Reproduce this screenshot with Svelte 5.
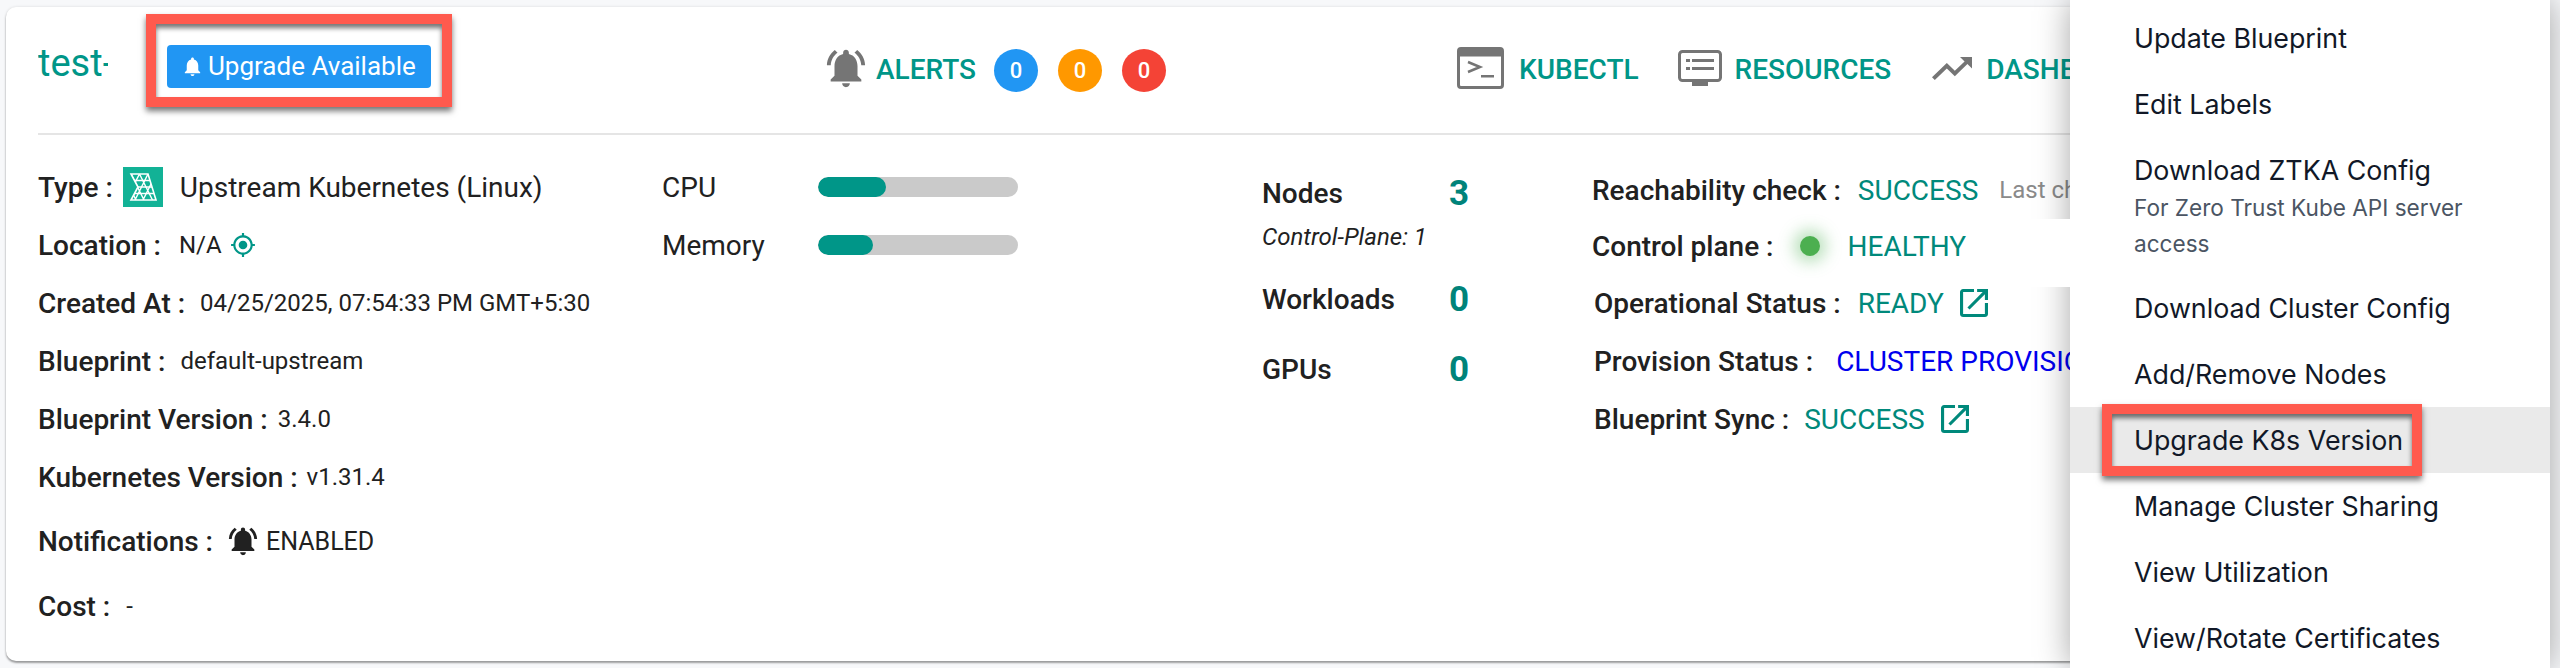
<script>
  const bellRing = "M7.58 4.08L6.15 2.65C3.75 4.48 2.17 7.3 2.03 10.5h2c.15-2.65 1.51-4.97 3.55-6.42zm12.39 6.42h2c-.15-3.2-1.73-6.02-4.12-7.85l-1.42 1.43c2.02 1.45 3.39 3.77 3.54 6.42zM18 11c0-3.07-1.64-5.64-4.5-6.32V4c0-.83-.67-1.5-1.5-1.5s-1.5.67-1.5 1.5v.68C7.63 5.36 6 7.92 6 11v5l-2 2v1h16v-1l-2-2v-5zm-6 11c.14 0 .27-.01.4-.04.65-.14 1.18-.58 1.44-1.18.1-.24.15-.5.15-.78h-4c.01 1.1.9 2 2.01 2z";
  const bell = "M12 22c1.1 0 2-.9 2-2h-4c0 1.1.89 2 2 2zm6-6v-5c0-3.07-1.64-5.64-4.5-6.32V4c0-.83-.67-1.5-1.5-1.5s-1.5.67-1.5 1.5v.68C7.63 5.36 6 7.92 6 11v5l-2 2v1h16v-1l-2-2z";
  const target = "M12 8c-2.21 0-4 1.79-4 4s1.79 4 4 4 4-1.79 4-4-1.79-4-4-4zm8.94 3c-.46-4.17-3.77-7.48-7.94-7.94V1h-2v2.06C6.83 3.52 3.52 6.83 3.06 11H1v2h2.06c.46 4.17 3.77 7.48 7.94 7.94V23h2v-2.06c4.17-.46 7.48-3.77 7.94-7.94H23v-2h-2.06zM12 19c-3.87 0-7-3.13-7-7s3.13-7 7-7 7 3.13 7 7-3.13 7-7 7z";
  const openNew = "M19 19H5V5h7V3H5c-1.11 0-2 .9-2 2v14c0 1.1.89 2 2 2h14c1.1 0 2-.9 2-2v-7h-2v7zM14 3v2h3.59l-9.83 9.83 1.41 1.41L19 6.41V10h2V3h-7z";
  const trending = "M16 6l2.29 2.29-4.88 4.88-4-4L2 16.59 3.41 18l6-6 4 4 6.3-6.29L22 12V6z";

  const alerts = ["blue", "orange", "red"];
  const usage = [
    { name: "CPU", width: 68 },
    { name: "Memory", width: 55 }
  ];
  const counts = [
    { name: "Nodes", value: 3, note: "Control-Plane: 1" },
    { name: "Workloads", value: 0 },
    { name: "GPUs", value: 0 }
  ];
  const menu = [
    { label: "Update Blueprint" },
    { label: "Edit Labels" },
    { label: "Download ZTKA Config", sub: "For Zero Trust Kube API server access" },
    { label: "Download Cluster Config" },
    { label: "Add/Remove Nodes" },
    { label: "Upgrade K8s Version", active: true },
    { label: "Manage Cluster Sharing" },
    { label: "View Utilization" },
    { label: "View/Rotate Certificates" }
  ];
</script>

<div class="page">
  <div class="card">
    <header class="head">
      <div class="title">test-cluster</div>
      <button class="upgrade">
        <svg class="upgrade-bell" viewBox="0 0 24 24"><path d={bell} /></svg>
        Upgrade Available
      </button>

      <svg class="icon alert-bell" viewBox="0 0 24 24"><path d={bellRing} /></svg>
      <span class="link alerts-link">ALERTS</span>
      {#each alerts as color}
        <span class="count {color}">0</span>
      {/each}

      <svg class="icon term" viewBox="0 0 47 42">
        <rect x="1.5" y="1.5" width="44" height="39" rx="2.5" fill="none" stroke="#757575" stroke-width="3" />
        <rect x="1.5" y="1.5" width="44" height="8" fill="#757575" />
        <path d="M11 15l12 5-12 5" fill="none" stroke="#757575" stroke-width="2.5" />
        <rect x="24" y="28" width="13" height="2.5" fill="#757575" />
      </svg>
      <span class="link kubectl-link">KUBECTL</span>

      <svg class="icon res" viewBox="0 0 44 36">
        <rect x="1.5" y="1.5" width="41" height="29" rx="3" fill="none" stroke="#757575" stroke-width="3" />
        <rect x="14" y="31" width="16" height="5" fill="#757575" />
        <rect x="8" y="9" width="4" height="3" fill="#757575" />
        <rect x="14" y="9" width="22" height="3" fill="#757575" />
        <rect x="8" y="17" width="4" height="3" fill="#757575" />
        <rect x="14" y="17" width="22" height="3" fill="#757575" />
      </svg>
      <span class="link res-link">RESOURCES</span>

      <svg class="icon trend" viewBox="2 6 20 12" preserveAspectRatio="none"><path d={trending} /></svg>
      <span class="link dash-link">DASHBOARD</span>
    </header>

    <div class="body">
      <div class="col info">
        <div class="row">
          <b>Type :</b>
          <svg class="logo" viewBox="0 0 40 40">
            <defs>
              <clipPath id="logo-shape"><path d="M8 7h17l8 26H8l7-13z" /></clipPath>
            </defs>
            <rect width="40" height="40" fill="#12b296" />
            <path d="M8 7h17l8 26H8l7-13z" fill="none" stroke="#fff" stroke-width="1.6" />
            <g clip-path="url(#logo-shape)" fill="none" stroke="#fff" stroke-width="1.4">
              <path d="M5 13.500h30M5 20h30M5 26.500h30" />
              <path d="M8 7l13 26M16.500 7l13 26M3 13l10 20M25 7L12 33M16.500 7L3 33M33 7L20 33" />
            </g>
          </svg>
          <span class="type-val">Upstream Kubernetes (Linux)</span>
        </div>
        <div class="row">
          <b>Location :</b>
          <span class="na">N/A</span>
          <svg class="gps" viewBox="0 0 24 24"><path d={target} /></svg>
        </div>
        <div class="row">
          <b>Created At :</b>
          <span class="val created">04/25/2025, 07:54:33 PM GMT+5:30</span>
        </div>
        <div class="row">
          <b>Blueprint :</b>
          <span class="val bp">default-upstream</span>
        </div>
        <div class="row">
          <b>Blueprint Version :</b>
          <span class="val bpv">3.4.0</span>
        </div>
        <div class="row">
          <b>Kubernetes Version :</b>
          <span class="val kv">v1.31.4</span>
        </div>
        <div class="row notif">
          <b>Notifications :</b>
          <svg class="notif-bell" viewBox="0 0 24 24"><path d={bellRing} /></svg>
          <span class="enabled">ENABLED</span>
        </div>
        <div class="row cost">
          <b>Cost :</b>
          <span class="val dash">-</span>
        </div>
      </div>

      <div class="col usage">
        {#each usage as u}
          <div class="row">
            <span class="usage-name">{u.name}</span>
            <div class="track"><div class="fill" style="width: {u.width}px"></div></div>
          </div>
        {/each}
      </div>

      <div class="col counts">
        {#each counts as c}
          <div class="count-row">
            <b>{c.name}</b>
            <span class="num">{c.value}</span>
          </div>
          {#if c.note}
            <div class="note">{c.note}</div>
          {/if}
        {/each}
      </div>

      <div class="col status">
        <div class="row reach-row">
          <b>Reachability check :</b>
          <span class="ok reach">SUCCESS</span>
          <span class="last">Last checked</span>
        </div>
        <div class="row control">
          <b>Control plane :</b>
          <span class="dot"></span>
          <span class="ok healthy">HEALTHY</span>
        </div>
        <div class="row indent">
          <b>Operational Status :</b>
          <span class="ok ready">READY</span>
          <svg class="ext" viewBox="3 3 18 18"><path d={openNew} /></svg>
        </div>
        <div class="row indent">
          <b>Provision Status :</b>
          <span class="prov">CLUSTER PROVISIONING</span>
        </div>
        <div class="row indent">
          <b>Blueprint Sync :</b>
          <span class="ok sync">SUCCESS</span>
          <svg class="ext" viewBox="3 3 18 18"><path d={openNew} /></svg>
        </div>
      </div>
    </div>
  </div>

  <nav class="menu">
    {#each menu as item}
      <div class="item" class:active={item.active} class:tall={item.sub}>
        <div class="item-label">{item.label}</div>
        {#if item.sub}
          <div class="item-sub">{item.sub}</div>
        {/if}
      </div>
    {/each}
  </nav>

  <div class="mark mark-upgrade"></div>
  <div class="mark mark-k8s"></div>
</div>

<style>
  :global(body) {
    margin: 0;
    background: #f7f8fa;
  }

  .page {
    position: relative;
    width: 2560px;
    height: 668px;
    overflow: hidden;
    padding: 7px 0 0 6px;
    box-sizing: border-box;
    font-family: Roboto, sans-serif;
    font-size: 28px;
    color: #212121;
  }

  .card {
    width: 2540px;
    height: 654px;
    background: #fff;
    border-radius: 10px;
    box-shadow: 0 2px 2px rgba(0, 0, 0, 0.35), 0 0 3px rgba(0, 0, 0, 0.12);
  }

  .head {
    display: flex;
    align-items: center;
    height: 126px;
    margin-left: 32px;
    border-bottom: 2px solid #e5e5e5;
    white-space: nowrap;
  }

  .title {
    width: 70px;
    margin-top: -14px;
    overflow: hidden;
    font-size: 38px;
    color: #009688;
  }

  .upgrade {
    display: flex;
    align-items: center;
    width: 264px;
    height: 43px;
    margin: -8px 0 0 59px;
    padding: 0 0 0 14px;
    box-sizing: border-box;
    border: none;
    border-radius: 4px;
    background: #2196f3;
    color: #fff;
    font-family: Roboto, sans-serif;
    font-size: 26px;
  }

  .upgrade-bell {
    width: 23px;
    height: 25px;
    margin-right: 4px;
    fill: #fff;
  }

  .icon {
    flex: none;
    fill: #757575;
    margin-top: -4px;
  }

  .link {
    margin-top: -2px;
    font-weight: 500;
    color: #009688;
  }

  .alert-bell {
    width: 46px;
    height: 46px;
    margin-left: 392px;
  }

  .alerts-link {
    margin-left: 7px;
  }

  .count {
    display: flex;
    align-items: center;
    justify-content: center;
    width: 44px;
    height: 43px;
    margin: 0 0 0 19px;
    border-radius: 50%;
    color: #fff;
    font-size: 22px;
    font-weight: 500;
  }

  .count.blue {
    margin-left: 18px;
    background: #2196f3;
  }

  .count.orange {
    margin-left: 20px;
    background: #ff9800;
  }

  .count.red {
    margin-left: 20px;
    background: #f44336;
  }

  .term {
    width: 47px;
    height: 42px;
    margin-left: 291px;
  }

  .kubectl-link {
    margin-left: 15px;
  }

  .res {
    width: 44px;
    height: 36px;
    margin-left: 39px;
  }

  .res-link {
    margin-left: 13px;
  }

  .trend {
    width: 40px;
    height: 23px;
    margin-left: 41px;
  }

  .dash-link {
    margin-left: 14px;
  }

  .body {
    display: grid;
    grid-template-columns: 624px 600px 330px 478px;
    margin-left: 32px;
    padding-top: 23px;
    white-space: nowrap;
  }

  .row {
    display: flex;
    align-items: center;
    height: 58px;
  }

  b {
    font-weight: 500;
  }

  .val {
    font-size: 24px;
  }

  .logo {
    width: 40px;
    height: 40px;
    margin-left: 10px;
  }

  .type-val {
    margin-left: 17px;
  }

  .na {
    margin-left: 18px;
    font-size: 24px;
  }

  .gps {
    width: 26px;
    height: 26px;
    margin-left: 8px;
    fill: #009688;
  }

  .created {
    margin-left: 15px;
  }

  .bp {
    margin-left: 15px;
  }

  .bpv {
    margin-left: 10px;
  }

  .kv {
    margin-left: 9px;
  }

  .notif {
    margin-top: 6px;
  }

  .notif-bell {
    width: 34px;
    height: 34px;
    margin: 0 6px 0 13px;
    fill: #212121;
  }

  .enabled {
    font-size: 25px;
  }

  .cost {
    margin-top: 7px;
  }

  .dash {
    margin-left: 16px;
  }

  .usage-name {
    width: 156px;
  }

  .track {
    width: 200px;
    height: 20px;
    border-radius: 10px;
    background: #cacaca;
    overflow: hidden;
  }

  .fill {
    height: 100%;
    border-radius: 10px;
    background: #009688;
  }

  .count-row {
    display: flex;
    align-items: center;
    height: 62px;
    margin-top: 4px;
  }

  .count-row b {
    width: 187px;
  }

  .count-row:last-child {
    margin-top: 8px;
  }

  .count-row:nth-child(3) {
    margin-top: 0;
  }

  .num {
    font-size: 35px;
    font-weight: 700;
    color: #00837a;
  }

  .note {
    height: 44px;
    font-size: 24px;
    font-style: italic;
    line-height: 26px;
  }

  .ok {
    color: #00897b;
  }

  .reach-row {
    margin-top: 3px;
  }

  .reach {
    margin-left: 17px;
  }

  .last {
    margin-left: 21px;
    font-size: 24px;
    color: #8a8a8a;
  }

  .control {
    position: relative;
    z-index: 3;
    height: 68px;
    margin: 0 0 -13px;
    padding-bottom: 14px;
    box-sizing: border-box;
    background: #fff;
  }

  .dot {
    width: 20px;
    height: 20px;
    margin-left: 26px;
    border-radius: 50%;
    background: #4caf50;
    box-shadow: 0 0 16px 6px rgba(76, 175, 80, 0.4);
  }

  .healthy {
    margin-left: 28px;
  }

  .indent {
    padding-left: 2px;
  }

  .ready {
    margin-left: 17px;
  }

  .ext {
    width: 28px;
    height: 28px;
    margin-left: 16px;
    fill: #00897b;
  }

  .prov {
    margin-left: 23px;
    color: #0000ee;
  }

  .sync {
    margin-left: 15px;
  }

  .menu {
    position: absolute;
    top: 0;
    right: 10px;
    z-index: 2;
    width: 480px;
    height: 668px;
    padding-top: 5px;
    box-sizing: border-box;
    background: #fff;
    box-shadow: 0 0 32px rgba(0, 0, 0, 0.35);
    font-family: Inter, sans-serif;
    font-size: 26.8px;
    color: #111827;
  }

  .item {
    display: flex;
    flex-direction: column;
    justify-content: center;
    height: 66px;
    padding: 0 55px 0 64px;
  }

  .item.tall {
    justify-content: flex-start;
    height: 138px;
    padding-top: 17px;
    box-sizing: border-box;
  }

  .item.active {
    background: #eaeaea;
  }

  .item-label {
    line-height: 32px;
  }

  .item-sub {
    margin-top: 4px;
    font-size: 22.6px;
    line-height: 36px;
    color: #4b5563;
  }

  .mark {
    position: absolute;
    z-index: 4;
    box-sizing: border-box;
    border: 10px solid #ff5a4e;
    box-shadow: 0 4px 6px rgba(0, 0, 0, 0.55), inset 0 4px 5px rgba(0, 0, 0, 0.55);
  }

  .mark-upgrade {
    left: 146px;
    top: 14px;
    width: 306px;
    height: 93px;
  }

  .mark-k8s {
    left: 2102px;
    top: 404px;
    width: 320px;
    height: 72px;
  }
</style>
